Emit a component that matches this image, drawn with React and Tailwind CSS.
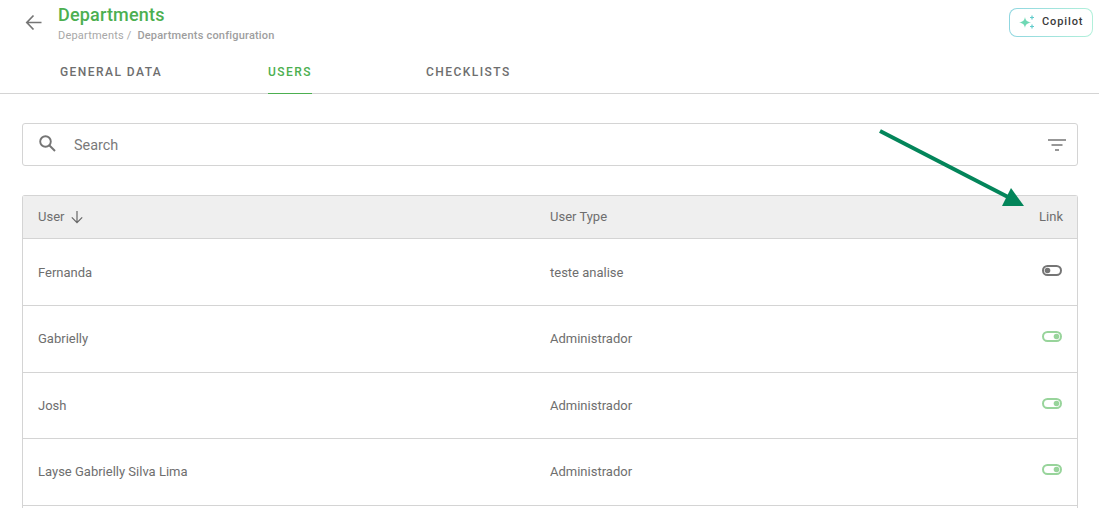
import React from "react";

const rows = [
  { name: "Fernanda", type: "teste analise", on: false, h: "h-[67px]", text: "pt-[2px]", tog: "mb-[4px]" },
  { name: "Gabrielly", type: "Administrador", on: true, h: "h-[67px]", text: "", tog: "mb-[6px]" },
  { name: "Josh", type: "Administrador", on: true, h: "h-[66px]", text: "pt-[1px]", tog: "mb-[4px]" },
  { name: "Layse Gabrielly Silva Lima", type: "Administrador", on: true, h: "h-[67px]", text: "", tog: "mb-[6px]" },
];

function Toggle({ on }) {
  const color = on ? "#98d49b" : "#757575";
  return (
    <svg width="20" height="11" viewBox="0 0 20 11" fill="none" className="block">
      <rect x="1" y="1" width="18" height="9" rx="4.5" stroke={color} strokeWidth="2" />
      <circle cx={on ? 14.5 : 5.5} cy="5.5" r="2.8" fill={color} />
    </svg>
  );
}

export default function App() {
  return (
    <div className="relative h-[508px] w-[1099px] overflow-hidden bg-white font-['Roboto',sans-serif]">
      <header className="h-[94px] border-b border-[#d4d4d4]">
        <div className="flex h-[55px] items-start justify-between pr-[6px]">
          <div className="flex items-start">
            <svg width="20" height="20" viewBox="0 0 20 20" fill="none" className="ml-[24px] mt-[12px]">
              <path d="M17.5 10.5H3M9.5 3.5L2.8 10.5L9.5 17.5" stroke="#757575" strokeWidth="1.7" />
            </svg>
            <div className="ml-[14px] mt-[4px]">
              <div className="text-[18px] font-medium leading-[22px] tracking-[0.18px] text-[#4caf50]">Departments</div>
              <div className="mt-[3px] whitespace-pre text-[11px] leading-[13px] tracking-[0.2px] text-[#a8a8a8]">
                Departments /  <span className="font-medium text-[#9e9e9e]">Departments configuration</span>
              </div>
            </div>
          </div>
          <div className="mt-[8px] rounded-[8px] bg-gradient-to-r from-[#8fd6e0] to-[#b2f0da] p-px">
            <div className="flex h-[27px] w-[82px] items-center gap-[7px] rounded-[7px] bg-white pl-[9px]">
              <svg width="16" height="16" viewBox="0 0 16 16">
                <path d="M6 2C6.5 5.2 7.8 6.9 12.2 7.5C7.8 8.1 6.5 9.8 6 13C5.5 9.8 4.2 8.1 -0.2 7.5C4.2 6.9 5.5 5.2 6 2Z" fill="#6fd8b4" />
                <path d="M13 0.5V4.5M11 2.5H15M13 9.5V13.5M11 11.5H15" stroke="#62cccc" strokeWidth="1.2" />
              </svg>
              <span className="text-[11px] font-medium tracking-[0.9px] text-[#3a3a3a]">Copilot</span>
            </div>
          </div>
        </div>
        <nav className="flex h-[38px] text-[12px] font-medium tracking-[1.45px]">
          <div className="ml-[60px] flex h-full w-[102px] items-center whitespace-nowrap pb-[5px] text-[#6e6e6e]">GENERAL DATA</div>
          <div className="ml-[106px] flex h-[39px] w-[44px] items-center whitespace-nowrap border-b border-[#4caf50] pb-[4px] text-[#4caf50]">USERS</div>
          <div className="ml-[114px] flex h-full items-center whitespace-nowrap pb-[5px] text-[#6e6e6e]">CHECKLISTS</div>
        </nav>
      </header>

      <main className="px-[22px] pt-[29px]">
        <div className="flex h-[43px] w-[1056px] items-center rounded-[3px] border border-[#d4d4d4] pl-[15px] pr-[11px]">
          <svg width="19" height="19" viewBox="0 0 19 19" fill="none" className="mb-[2px]">
            <circle cx="7.5" cy="7.5" r="5.3" stroke="#757575" strokeWidth="1.9" />
            <path d="M11.5 11.5L17 17" stroke="#757575" strokeWidth="2" />
          </svg>
          <span className="ml-[17px] flex-1 pt-[2px] text-[14.4px] text-[#7a7a7a]">Search</span>
          <svg width="18" height="12" viewBox="0 0 18 12" fill="none">
            <path d="M0 1H18M3.5 6H14.5M7 11H11" stroke="#757575" strokeWidth="1.4" />
          </svg>
        </div>

        <div className="mt-[29px] w-[1056px] rounded-t-[3px] border border-b-0 border-[#d4d4d4] text-[13px] text-[#6e6e6e]">
          <div className="flex h-[43px] items-center border-b border-[#d4d4d4] bg-[#efefef] pl-[15px] pr-[14px] font-normal">
            <div className="flex w-[512px] items-center gap-[6px]">
              <span>User</span>
              <svg width="14" height="14" viewBox="0 0 14 14" fill="none">
                <path d="M7 1V12.5M1.8 7.4L7 12.6L12.2 7.4" stroke="#666666" strokeWidth="1.2" />
              </svg>
            </div>
            <div className="flex-1">User Type</div>
            <div>Link</div>
          </div>
          {rows.map((r) => (
            <div key={r.name} className={`flex ${r.h} items-center border-b border-[#d4d4d4] pl-[15px] pr-[15px]`}>
              <div className={`w-[512px] ${r.text}`}>{r.name}</div>
              <div className={`flex-1 ${r.text}`}>{r.type}</div>
              <div className={r.tog}><Toggle on={r.on} /></div>
            </div>
          ))}
          <div className="h-[40px]" />
        </div>
      </main>

      <svg className="absolute left-[870px] top-[120px]" width="160" height="95" viewBox="0 0 160 95" fill="none">
        <path d="M10 11L138 77" stroke="#03855a" strokeWidth="4" />
        <path d="M132 86L154 86L141 68Z" fill="#03855a" />
      </svg>
    </div>
  );
}
